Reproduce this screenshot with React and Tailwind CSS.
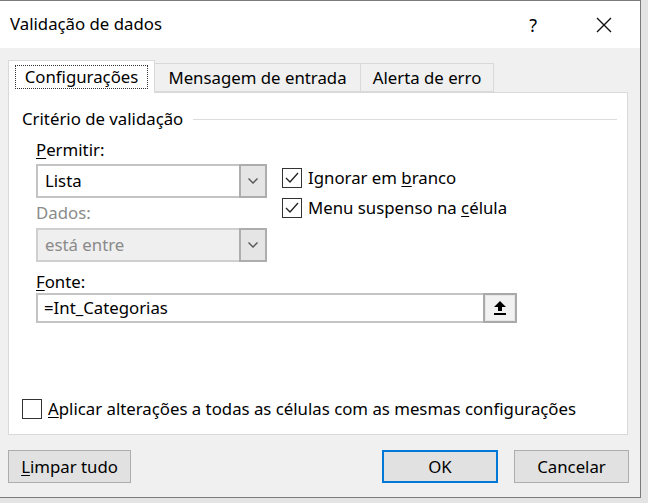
import React from "react";

const font = { fontFamily: '"Noto Sans", "Open Sans", sans-serif' };

function Chevron() {
  return (
    <svg width="12" height="8" viewBox="0 0 12 8">
      <path d="M1.5 1.5 L6 6 L10.5 1.5" fill="none" stroke="#555" strokeWidth="1.4" />
    </svg>
  );
}

function Check() {
  return (
    <svg width="16" height="16" viewBox="0 0 16 16">
      <path d="M2 8 L6 12 L14 3" fill="none" stroke="#222" strokeWidth="1.3" />
    </svg>
  );
}

function Checkbox({ checked }) {
  return (
    <div className="w-[20px] h-[20px] shrink-0 border-[1.5px] border-[#333] bg-white flex items-center justify-center">
      {checked && <Check />}
    </div>
  );
}

function Combo({ value, disabled }) {
  return (
    <div className="flex h-[34px] w-[231px]">
      <div
        className={`flex-1 flex items-center pl-[7px] border-2 border-r-0 ${
          disabled
            ? "bg-[#efefef] border-[#cfcfcf] text-[#8a8a8a]"
            : "bg-white border-[#c4c4c4] text-black"
        }`}
      >
        {value}
      </div>
      <div className="w-[28px] border-2 border-[#adadad] bg-[#e5e5e5] flex items-center justify-center">
        <Chevron />
      </div>
    </div>
  );
}

function Button({ children, primary, className }) {
  return (
    <div
      className={`h-[33px] flex items-center justify-center bg-[#e1e1e1] ${
        primary ? "border-2 border-[#0078d7]" : "border-[1.5px] border-[#adadad]"
      } ${className}`}
    >
      {children}
    </div>
  );
}

export default function App() {
  return (
    <div className="w-[648px] h-[503px] bg-[#e4e4e4] text-[16.8px] text-black" style={font}>
      <div className="w-[641px] h-[498px] flex flex-col border-t border-r border-b border-[#7b7b7b]">
        {/* title bar */}
        <div className="h-[47px] bg-white flex items-center pl-[10px] pr-[28px]">
          <span className="leading-none">Validação de dados</span>
          <span className="ml-auto mr-[59px] text-[18px] leading-none">?</span>
          <svg width="16" height="16" viewBox="0 0 16 16">
            <path d="M1 1 L15 15 M15 1 L1 15" stroke="#111" strokeWidth="1.4" />
          </svg>
        </div>

        {/* body */}
        <div className="flex-1 bg-[#f0f0f0] flex flex-col pl-[8px] pr-[12px] pt-[12px] pb-[14px]">
          {/* tabs */}
          <div className="flex items-start">
            <div className="relative z-10 h-[33px] w-[147px] bg-white border border-b-0 border-[#d9d9d9] flex items-center justify-center">
              <span className="border border-dotted border-[#333] h-[24px] w-[133px] flex items-center justify-center">
                Configurações
              </span>
            </div>
            <div className="mt-[3px] h-[29px] w-[206px] border border-l-0 border-[#d9d9d9] flex items-center justify-center">
              Mensagem de entrada
            </div>
            <div className="mt-[3px] h-[29px] w-[133px] border border-l-0 border-[#d9d9d9] flex items-center justify-center">
              Alerta de erro
            </div>
          </div>

          {/* panel */}
          <div className="-mt-px h-[343px] bg-white border border-[#d9d9d9] flex flex-col pt-[15px] pb-[15px]">
            <div className="flex items-center h-[22px] pl-[13px] pr-[10px]">
              <span>Critério de validação</span>
              <div className="flex-1 h-px bg-[#dcdcdc] ml-[10px]" />
            </div>

            <div className="flex pl-[27px] mt-[9px]">
              <div className="flex flex-col w-[231px]">
                <div className="h-[22px] flex items-center">
                  <span><u className="underline-offset-2">P</u>ermitir:</span>
                </div>
                <div className="mt-[3px]">
                  <Combo value="Lista" />
                </div>
                <div className="h-[22px] mt-[4px] flex items-center text-[#8a8a8a]">Dados:</div>
                <div className="mt-[4px]">
                  <Combo value="está entre" disabled />
                </div>
              </div>

              <div className="flex flex-col gap-[10px] ml-[15px] mt-[29px]">
                <div className="flex items-center gap-[6px] h-[20px]">
                  <Checkbox checked />
                  <span>Ignorar em <u className="underline-offset-2">b</u>ranco</span>
                </div>
                <div className="flex items-center gap-[6px] h-[20px]">
                  <Checkbox checked />
                  <span>Menu suspenso na <u className="underline-offset-2">c</u>élula</span>
                </div>
              </div>
            </div>

            <div className="pl-[27px] mt-[9px] h-[22px] flex items-center">
              <span><u className="underline-offset-2">F</u>onte:</span>
            </div>
            <div className="ml-[27px] flex h-[30px] w-[481px]">
              <div className="flex-1 flex items-center pl-[6px] border-2 border-r-0 border-[#c4c4c4]">
                =Int_Categorias
              </div>
              <div className="w-[34px] border-2 border-[#a9a9a9] bg-[#e6e6e6] p-px">
                <div className="w-full h-full bg-[#f2f2f2] flex items-center justify-center">
                  <svg width="14" height="16" viewBox="0 0 14 16">
                    <path d="M7 1 L13 7 L9 7 L9 11 L5 11 L5 7 L1 7 Z" fill="#000" />
                    <rect x="1" y="13" width="12" height="2" fill="#000" />
                  </svg>
                </div>
              </div>
            </div>

            <div className="mt-auto pl-[13px] flex items-center gap-[6px] h-[20px]">
              <Checkbox />
              <span>
                <u className="underline-offset-2">A</u>plicar alterações a todas as células com as mesmas configurações
              </span>
            </div>
          </div>

          {/* buttons */}
          <div className="mt-[15px] flex">
            <Button className="w-[123px]">
              <span><u className="underline-offset-2">L</u>impar tudo</span>
            </Button>
            <Button primary className="w-[116px] ml-auto">OK</Button>
            <Button className="w-[115px] ml-[16px] mr-[-1px]">Cancelar</Button>
          </div>
        </div>
      </div>
    </div>
  );
}
